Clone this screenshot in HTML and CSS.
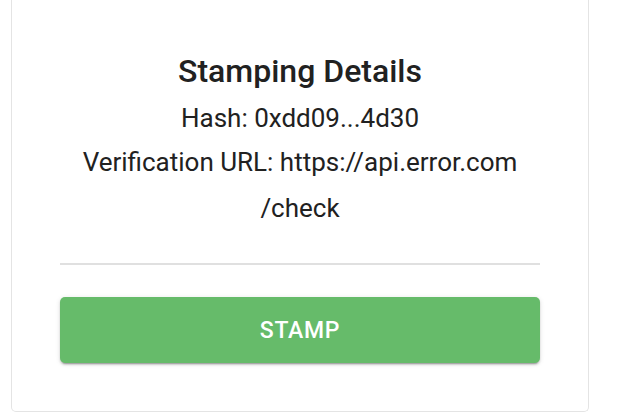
FILE: index.html
```html
<!DOCTYPE html>
<html>
<head>
<meta charset="utf-8">
<link rel="stylesheet" href="styles.css">
</head>
<body>
<div class="page">
  <div class="card">
    <h2 class="title">Stamping Details</h2>
    <p class="hash">Hash: 0xdd09...4d30</p>
    <p class="url">Verification URL: https://api.error.com<br>/check</p>
    <hr class="divider">
    <button class="stamp">STAMP</button>
  </div>
</div>
</body>
</html>
```
FILE: styles.css
```css
html, body {
  margin: 0;
  padding: 0;
  background: #ffffff;
}
body {
  font-family: Roboto, "Liberation Sans", sans-serif;
  color: #212121;
}
.page {
  padding: 0 0 0 11px;
}
.card {
  box-sizing: content-box;
  border: 1px solid #e4e4e4;
  border-top: none;
  border-radius: 0 0 5px 5px;
  padding: 52px 48px 48px 48px;
  width: 480px;
  display: flex;
  flex-direction: column;
  align-items: stretch;
  text-align: center;
}
.title {
  margin: 0;
  font-size: 32px;
  line-height: 38px;
  font-weight: 500;
}
.hash {
  margin: 7px 0 0 0;
  font-size: 26px;
  line-height: 42px;
  font-weight: 400;
}
.url {
  margin: 0;
  font-size: 26px;
  line-height: 46px;
  font-weight: 400;
}
.divider {
  margin: 32px 0 0 0;
  border: none;
  height: 2px;
  background: #e0e0e0;
}
.stamp {
  margin-top: 32px;
  height: 66px;
  border: none;
  border-radius: 5px;
  background: #66bb6a;
  color: #ffffff;
  font-family: Roboto, "Liberation Sans", sans-serif;
  font-size: 23px;
  font-weight: 500;
  letter-spacing: 0.7px;
  box-shadow: 0 3px 1px -2px rgba(0,0,0,0.2), 0 2px 2px 0 rgba(0,0,0,0.14), 0 1px 5px 0 rgba(0,0,0,0.12);
}
```
